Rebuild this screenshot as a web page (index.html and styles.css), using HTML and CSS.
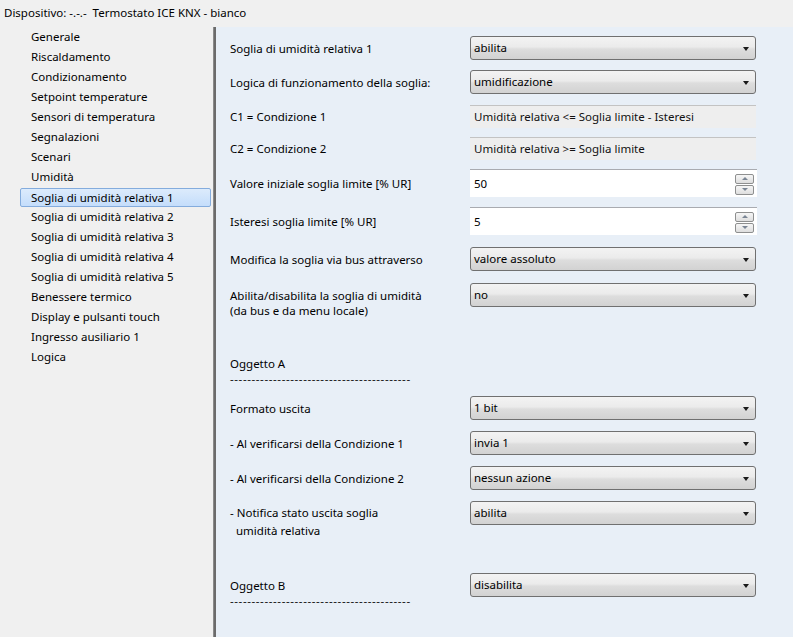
FILE: index.html
```html
<!DOCTYPE html>
<html lang="it">
<head>
<meta charset="utf-8">
<title>Termostato ICE KNX</title>
<link rel="stylesheet" href="styles.css">
</head>
<body>
<div class="app">
  <div class="titlebar">Dispositivo: -.-.-&nbsp;&nbsp;Termostato ICE KNX - bianco</div>
  <div class="main">
    <nav class="sidebar">
      <ul class="nav">
        <li>Generale</li>
        <li>Riscaldamento</li>
        <li>Condizionamento</li>
        <li>Setpoint temperature</li>
        <li>Sensori di temperatura</li>
        <li>Segnalazioni</li>
        <li>Scenari</li>
        <li>Umidità</li>
        <li class="selected">Soglia di umidità relativa 1</li>
        <li>Soglia di umidità relativa 2</li>
        <li>Soglia di umidità relativa 3</li>
        <li>Soglia di umidità relativa 4</li>
        <li>Soglia di umidità relativa 5</li>
        <li>Benessere termico</li>
        <li>Display e pulsanti touch</li>
        <li>Ingresso ausiliario 1</li>
        <li>Logica</li>
      </ul>
    </nav>
    <div class="divider"></div>
    <section class="content">
      <div class="row first">
        <div class="label">Soglia di umidità relativa 1</div>
        <div class="select"><span>abilita</span><i class="arrow"></i></div>
      </div>
      <div class="row">
        <div class="label">Logica di funzionamento della soglia:</div>
        <div class="select"><span>umidificazione</span><i class="arrow"></i></div>
      </div>
      <div class="row r-ro1">
        <div class="label ro-label">C1 = Condizione 1</div>
        <div class="readonly">Umidità relativa &lt;= Soglia limite - Isteresi</div>
      </div>
      <div class="row r-ro2">
        <div class="label ro-label">C2 = Condizione 2</div>
        <div class="readonly">Umidità relativa &gt;= Soglia limite</div>
      </div>
      <div class="row r-num1">
        <div class="label num-label">Valore iniziale soglia limite [% UR]</div>
        <div class="number"><span>50</span>
          <div class="spin"><b class="up"></b><b class="down"></b></div>
        </div>
      </div>
      <div class="row r-num2">
        <div class="label num-label">Isteresi soglia limite [% UR]</div>
        <div class="number"><span>5</span>
          <div class="spin"><b class="up"></b><b class="down"></b></div>
        </div>
      </div>
      <div class="row r-after-num">
        <div class="label">Modifica la soglia via bus attraverso</div>
        <div class="select"><span>valore assoluto</span><i class="arrow"></i></div>
      </div>
      <div class="row r-loose">
        <div class="label">Abilita/disabilita la soglia di umidità<br>(da bus e da menu locale)</div>
        <div class="select"><span>no</span><i class="arrow"></i></div>
      </div>

      <div class="section-head">
        <div class="sec-title">Oggetto A</div>
        <div class="dashes">------------------------------------------</div>
      </div>

      <div class="row r-after-head">
        <div class="label">Formato uscita</div>
        <div class="select"><span>1 bit</span><i class="arrow"></i></div>
      </div>
      <div class="row r-obj">
        <div class="label">- Al verificarsi della Condizione 1</div>
        <div class="select"><span>invia 1</span><i class="arrow"></i></div>
      </div>
      <div class="row r-obj">
        <div class="label">- Al verificarsi della Condizione 2</div>
        <div class="select"><span>nessun azione</span><i class="arrow"></i></div>
      </div>
      <div class="row r-obj">
        <div class="label tall">- Notifica stato uscita soglia<br>&nbsp; umidità relativa</div>
        <div class="select"><span>abilita</span><i class="arrow"></i></div>
      </div>

      <div class="row r-objb">
        <div class="label">
          <div>Oggetto B</div>
          <div class="dashes">------------------------------------------</div>
        </div>
        <div class="select"><span>disabilita</span><i class="arrow"></i></div>
      </div>
    </section>
  </div>
</div>
</body>
</html>
```

FILE: styles.css
```css
* { box-sizing: border-box; }

html, body {
  margin: 0;
  padding: 0;
}

body {
  width: 793px;
  height: 637px;
  overflow: hidden;
  background: #f0f0f0;
  font-family: "Noto Sans", "Open Sans", sans-serif;
  font-size: 11.5px;
  color: #000;
}

.app {
  display: flex;
  flex-direction: column;
  height: 637px;
}

.titlebar {
  height: 27px;
  padding: 5px 0 0 4px;
  line-height: 16px;
  background: #f0f0f0;
  color: #000;
  white-space: nowrap;
}

.main {
  flex: 1;
  display: flex;
  min-height: 0;
}

.sidebar {
  width: 213px;
  background: #f0f0f0;
}

.nav {
  list-style: none;
  margin: 0;
  padding: 0 0 0 20px;
}

.nav li {
  height: 20px;
  line-height: 20px;
  padding-left: 11px;
  width: 191px;
  white-space: nowrap;
  color: #000;
}

.nav li.selected {
  height: 19px;
  line-height: 17px;
  margin: 1px 0 0 0;
  padding-left: 10px;
  border: 1px solid #84acdd;
  border-radius: 2px;
  background: linear-gradient(#dcebfc, #c4ddfb);
}

.divider {
  width: 3px;
  background: #6b6b6b;
  border-left: 1px solid #8a8a8a;
}

.content {
  flex: 1;
  background: #e8eff7;
  padding: 9px 0 0 14px;
  display: flex;
  flex-direction: column;
}

.row {
  display: flex;
  align-items: flex-start;
  margin-top: 10px;
}

.row.first { margin-top: 0; }
.row.r-ro1 { margin-top: 11px; }
.row.r-ro2 { margin-top: 9px; }
.row.r-num1 { margin-top: 9px; }
.row.r-num2 { margin-top: 10px; }
.row.r-after-num { margin-top: 12px; }
.row.r-loose { margin-top: 12px; }
.row.r-after-head { margin-top: 10px; }
.row.r-obj { margin-top: 11px; }
.row.r-objb { margin-top: 33px; }

.label {
  width: 240px;
  flex: none;
  padding-top: 5px;
  line-height: 15px;
  white-space: nowrap;
}

.label.tall {
  padding-top: 3px;
  line-height: 18px;
}

.label.ro-label { padding-top: 4px; }
.label.num-label { padding-top: 7px; }

.select {
  width: 286px;
  height: 24px;
  border: 1px solid #707070;
  border-radius: 3px;
  background: linear-gradient(#f3f3f3 0%, #ebebeb 45%, #dddddd 55%, #d2d2d2 100%);
  display: flex;
  align-items: center;
  justify-content: space-between;
  padding: 0 6px 0 3px;
  color: #000;
}

.select span { line-height: 16px; margin-top: -1px; }

.arrow {
  width: 0;
  height: 0;
  border-left: 3px solid transparent;
  border-right: 3px solid transparent;
  border-top: 4px solid #1a1a1a;
  margin-top: 2px;
}

.readonly {
  width: 286px;
  height: 23px;
  border-top: 1px solid #c3c3c3;
  background: #eeeeee;
  padding: 3px 0 0 4px;
  line-height: 16px;
  color: #111;
}

.number {
  width: 287px;
  height: 28px;
  border-top: 1px solid #a9abb0;
  background: #ffffff;
  display: flex;
  align-items: center;
  justify-content: space-between;
  padding: 0 3px 0 4px;
}

.number span { line-height: 16px; }

.spin {
  display: flex;
  flex-direction: column;
  gap: 1px;
  margin-top: 1px;
}

.spin b {
  display: flex;
  align-items: center;
  justify-content: center;
  width: 19px;
  height: 10px;
  border: 1px solid #8e8f8f;
  border-radius: 2px;
  background: linear-gradient(#f6f6f6, #dedede);
}

.spin b::after {
  content: "";
  width: 0;
  height: 0;
  border-left: 3px solid transparent;
  border-right: 3px solid transparent;
}

.spin b.up::after { border-bottom: 3px solid #7a8594; }
.spin b.down::after { border-top: 3px solid #7a8594; }

.section-head {
  margin-top: 37px;
  line-height: 15px;
}

.sec-title { padding-top: 1px; }

.dashes {
  white-space: nowrap;
  line-height: 15px;
  letter-spacing: 0.6px;
  color: #111;
}
```
